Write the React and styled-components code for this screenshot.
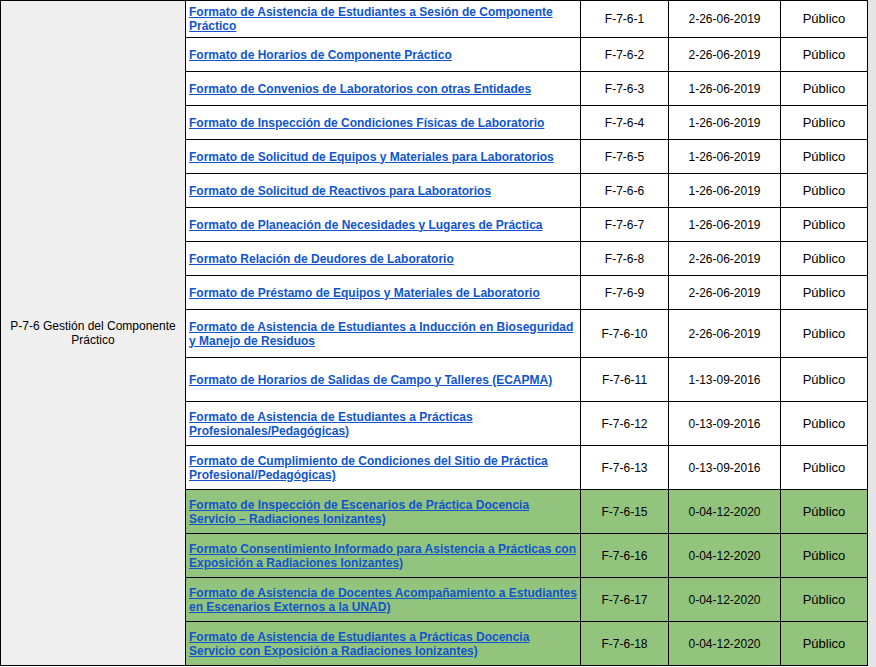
import styled, { createGlobalStyle } from 'styled-components';

const Global = createGlobalStyle`
  body { margin: 0; background: #e6e6e6; font-family: "Liberation Sans", Arial, sans-serif; }
`;

const Page = styled.div`
  width: 868px;
  height: 667px;
  background: #fff;
  overflow: hidden;
`;

const Table = styled.table`
  border-collapse: collapse;
  width: 867px;
  table-layout: fixed;
  font-size: 12px;
`;

const Col = styled.col`
  width: ${(p) => p.$w}px;
`;

const Cell = styled.td`
  border: 1px solid #000;
  padding: 0 3px;
  vertical-align: middle;
  text-align: ${(p) => (p.$left ? 'left' : 'center')};
  background: ${(p) => (p.$green ? '#93c47d' : p.$gray ? '#efefef' : '#fff')};
  color: #000;
  line-height: 14px;
  font-size: ${(p) => (p.$big ? '13px' : '12px')};
`;

const Row = styled.tr`
  height: ${(p) => p.$h}px;
`;

const Link = styled.a`
  color: #1155cc;
  font-weight: bold;
  text-decoration: underline;
`;

const widths = [185, 395, 88, 112, 87];

const rows = [
  ['Formato de Asistencia de Estudiantes a Sesión de Componente Práctico', 'F-7-6-1', '2-26-06-2019', 37],
  ['Formato de Horarios de Componente Práctico', 'F-7-6-2', '2-26-06-2019', 34],
  ['Formato de Convenios de Laboratorios con otras Entidades', 'F-7-6-3', '1-26-06-2019', 34],
  ['Formato de Inspección de Condiciones Físicas de Laboratorio', 'F-7-6-4', '1-26-06-2019', 34],
  ['Formato de Solicitud de Equipos y Materiales para Laboratorios', 'F-7-6-5', '1-26-06-2019', 34],
  ['Formato de Solicitud de Reactivos para Laboratorios', 'F-7-6-6', '1-26-06-2019', 34],
  ['Formato de Planeación de Necesidades y Lugares de Práctica', 'F-7-6-7', '1-26-06-2019', 34],
  ['Formato Relación de Deudores de Laboratorio', 'F-7-6-8', '2-26-06-2019', 34],
  ['Formato de Préstamo de Equipos y Materiales de Laboratorio', 'F-7-6-9', '2-26-06-2019', 34],
  ['Formato de Asistencia de Estudiantes a Inducción en Bioseguridad y Manejo de Residuos', 'F-7-6-10', '2-26-06-2019', 48],
  ['Formato de Horarios de Salidas de Campo y Talleres (ECAPMA)', 'F-7-6-11', '1-13-09-2016', 44],
  ['Formato de Asistencia de Estudiantes a Prácticas Profesionales/Pedagógicas)', 'F-7-6-12', '0-13-09-2016', 44],
  ['Formato de Cumplimiento de Condiciones del Sitio de Práctica Profesional/Pedagógicas)', 'F-7-6-13', '0-13-09-2016', 44],
  ['Formato de Inspección de Escenarios de Práctica Docencia Servicio – Radiaciones Ionizantes)', 'F-7-6-15', '0-04-12-2020', 44, true],
  ['Formato Consentimiento Informado para Asistencia a Prácticas con Exposición a Radiaciones Ionizantes)', 'F-7-6-16', '0-04-12-2020', 44, true],
  ['Formato de Asistencia de Docentes Acompañamiento a Estudiantes en Escenarios Externos a la UNAD)', 'F-7-6-17', '0-04-12-2020', 44, true],
  ['Formato de Asistencia de Estudiantes a Prácticas Docencia Servicio con Exposición a Radiaciones Ionizantes)', 'F-7-6-18', '0-04-12-2020', 44, true],
];

export default function App() {
  return (
    <Page>
      <Global />
      <Table>
        <colgroup>
          {widths.map((w, i) => (
            <Col key={i} $w={w} />
          ))}
        </colgroup>
        <tbody>
          {rows.map(([title, code, date, h, green], i) => (
            <Row key={code} $h={h}>
              {i === 0 && (
                <Cell $gray rowSpan={rows.length}>
                  P-7-6 Gestión del Componente Práctico
                </Cell>
              )}
              <Cell $left $green={green}>
                <Link href="#">{title}</Link>
              </Cell>
              <Cell $green={green}>{code}</Cell>
              <Cell $green={green}>{date}</Cell>
              <Cell $green={green} $big>Público</Cell>
            </Row>
          ))}
        </tbody>
      </Table>
    </Page>
  );
}
